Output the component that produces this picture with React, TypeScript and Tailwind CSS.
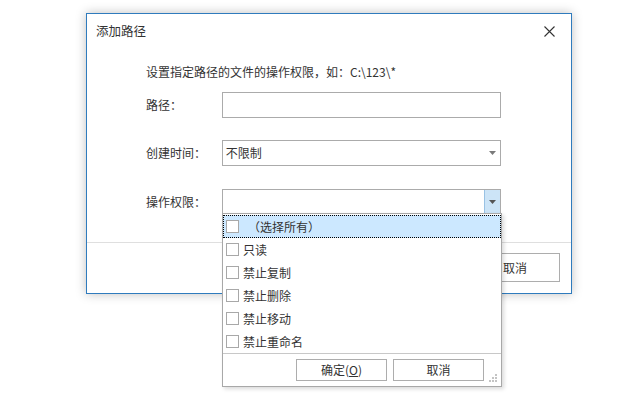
import React from "react";

const font = { fontFamily: '"Noto Sans CJK SC", "Noto Sans", sans-serif' };

function Arrow({ color = "#7a7a7a" }: { color?: string }) {
  return (
    <svg width="7" height="4" viewBox="0 0 7 4">
      <path d="M0 0 L7 0 L3.5 4 Z" fill={color} />
    </svg>
  );
}

function Check({ label, active }: { label: string; active?: boolean }) {
  return (
    <div
      className={
        "flex items-center h-[23px] pl-[3px] " +
        (active ? "bg-[#cce8ff] outline outline-1 outline-dotted outline-black -outline-offset-1" : "")
      }
    >
      <div className="w-[13px] h-[13px] border border-[#a8a8a8] bg-white" />
      <span className={"text-[12px] text-[#333] " + (active ? "ml-[9px]" : "ml-[4px]")}>{label}</span>
    </div>
  );
}

export default function App() {
  return (
    <div className="w-[638px] h-[399px] bg-white relative overflow-hidden" style={font}>
      <div className="pt-[13px] pl-[86px]">
        <div className="w-[486px] h-[281px] border border-[#2f7bbd] bg-white shadow-[0_0_10px_rgba(0,0,0,0.25)] flex flex-col">
          <div className="h-[34px] flex items-center justify-between pl-[9px] pr-[16px]">
            <span className="text-[12.5px] text-[#333]">添加路径</span>
            <svg width="11" height="11" viewBox="0 0 11 11">
              <path d="M0.5 0.5 L10.5 10.5 M10.5 0.5 L0.5 10.5" stroke="#333" strokeWidth="1.1" />
            </svg>
          </div>
          <div className="pl-[59px] pr-[70px] flex flex-col">
            <div className="mt-[14px] h-[20px] flex items-center text-[12px] text-[#333]">
              设置指定路径的文件的操作权限，如：C:\123\*
            </div>
            <div className="mt-[10px] flex items-center">
              <span className="w-[76px] text-[12px] text-[#333]">路径：</span>
              <div className="w-[280px] h-[26px] border border-[#ababab] bg-white" />
            </div>
            <div className="mt-[22px] flex items-center">
              <span className="w-[76px] text-[12px] text-[#333]">创建时间：</span>
              <div className="w-[280px] h-[26px] border border-[#ababab] bg-white flex items-center justify-between pl-[3px] pr-[4px]">
                <span className="text-[12px] text-[#333]">不限制</span>
                <Arrow />
              </div>
            </div>
            <div className="mt-[23px] flex items-center">
              <span className="w-[76px] text-[12px] text-[#333]">操作权限：</span>
              <div className="w-[280px] h-[25px] border border-[#ababab] bg-white flex items-center justify-end">
                <div className="w-[16px] h-full bg-[#cce4f7] border-l border-[#99c2e4] flex items-center justify-center">
                  <Arrow color="#555" />
                </div>
              </div>
            </div>
          </div>
          <div className="mt-auto border-t border-[#dfdfdf] h-[51px] flex items-start justify-end gap-[10px] pr-[11px] pt-[10px]">
            <button className="w-[90px] h-[29px] border border-[#adadad] bg-white text-[12px] text-[#333]">确定</button>
            <button className="w-[90px] h-[29px] border border-[#adadad] bg-white text-[12px] text-[#333]">取消</button>
          </div>
        </div>
      </div>

      <div className="absolute left-[222px] top-[213px] w-[280px] h-[174px] border border-[#a8a8a8] bg-white shadow-[2px_2px_4px_rgba(0,0,0,0.15)] flex flex-col">
        <div className="flex flex-col pt-[1px]">
          <Check label="（选择所有）" active />
          <Check label="只读" />
          <Check label="禁止复制" />
          <Check label="禁止删除" />
          <Check label="禁止移动" />
          <Check label="禁止重命名" />
        </div>
        <div className="mt-auto border-t border-[#c8c8c8] h-[35px] flex items-center justify-end gap-[6px] pr-[17px] relative">
          <button className="w-[91px] h-[22px] border border-[#adadad] bg-white text-[12px] text-[#333]">
            确定(<span className="underline">O</span>)
          </button>
          <button className="w-[91px] h-[22px] border border-[#adadad] bg-white text-[12px] text-[#333]">取消</button>
          <svg className="absolute right-[3px] bottom-[3px]" width="10" height="10" viewBox="0 0 10 10">
            <rect x="7" y="1" width="2" height="2" fill="#c4c4c4" />
            <rect x="4" y="4" width="2" height="2" fill="#c4c4c4" />
            <rect x="7" y="4" width="2" height="2" fill="#c4c4c4" />
            <rect x="1" y="7" width="2" height="2" fill="#c4c4c4" />
            <rect x="4" y="7" width="2" height="2" fill="#c4c4c4" />
            <rect x="7" y="7" width="2" height="2" fill="#c4c4c4" />
          </svg>
        </div>
      </div>
    </div>
  );
}
